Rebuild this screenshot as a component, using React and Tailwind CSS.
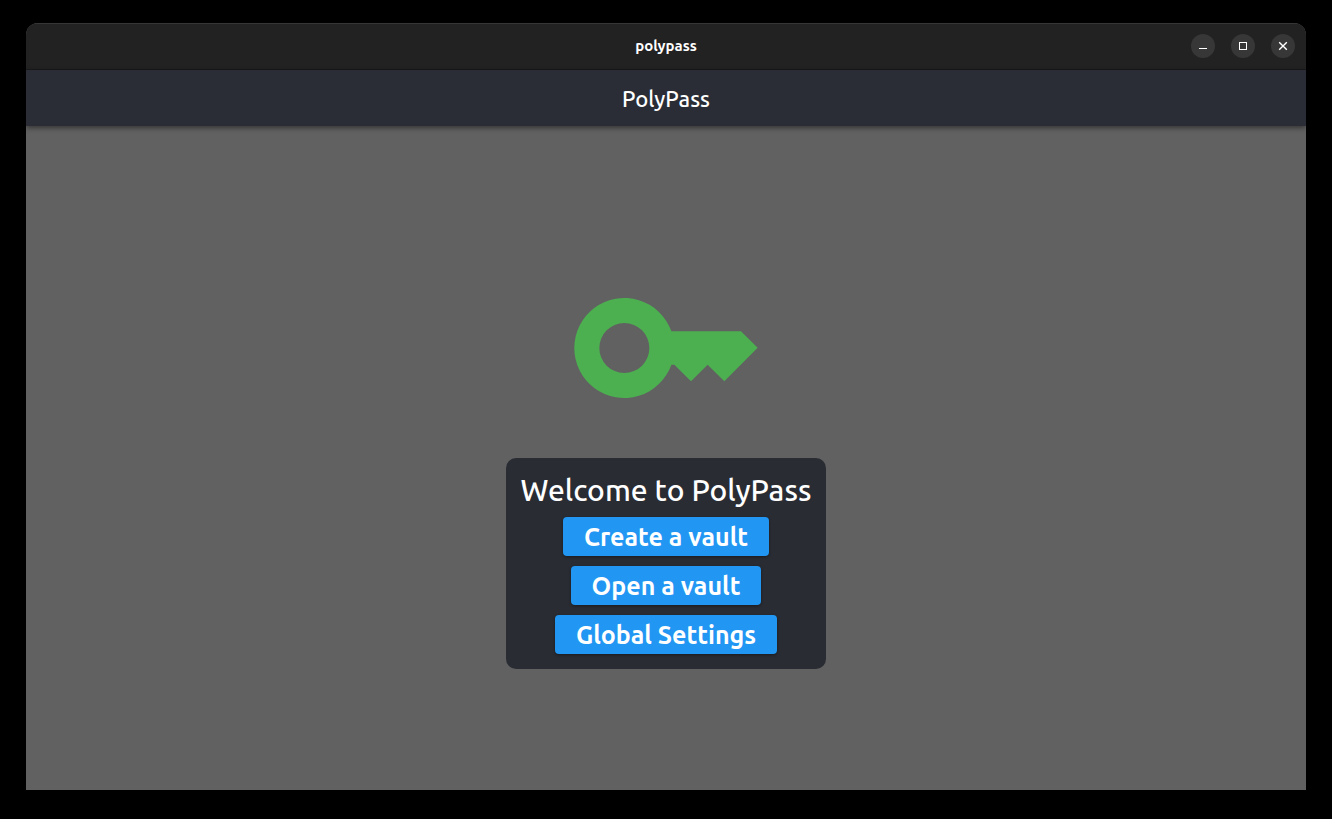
const windowButton =
  "flex size-6 items-center justify-center rounded-full bg-[#373737] text-white";

const actions = ["Create a vault", "Open a vault", "Global Settings"];

function TitleBar() {
  return (
    <div className="grid h-[47px] shrink-0 grid-cols-[1fr_auto_1fr] items-center border-t border-b border-t-[#363636] border-b-[#191919] bg-[#222222] px-[11px] pb-px">
      <span className="col-start-2 text-[15px] leading-5 font-bold text-white">polypass</span>
      <div className="flex gap-4 justify-self-end">
        <button type="button" aria-label="Minimize" className={windowButton}>
          <svg viewBox="0 0 16 16" className="size-4" fill="currentColor">
            <rect x="4" y="10" width="8" height="1" />
          </svg>
        </button>
        <button type="button" aria-label="Maximize" className={windowButton}>
          <svg viewBox="0 0 16 16" className="size-4" fill="none" stroke="currentColor">
            <rect x="4.5" y="4.5" width="7" height="7" />
          </svg>
        </button>
        <button type="button" aria-label="Close" className={windowButton}>
          <svg viewBox="0 0 16 16" className="size-4" fill="none" stroke="currentColor" strokeWidth="1.4">
            <path d="M4.2 4.2l7.6 7.6M11.8 4.2l-7.6 7.6" />
          </svg>
        </button>
      </div>
    </div>
  );
}

function KeyIcon() {
  return (
    <svg viewBox="0 0 24 24" className="size-[200px]" fill="#4caf50" aria-hidden="true">
      <path
        fillRule="evenodd"
        d="M21 10h-8.35A6 6 0 1 0 12.65 14H13l2 2 2-2 2 2 4-4.04L21 10zM7 15a3 3 0 1 1 0-6 3 3 0 0 1 0 6z"
      />
    </svg>
  );
}

export default function App() {
  return (
    <div className="flex min-h-screen flex-col bg-black px-[26px] pt-[23px] pb-[29px] font-['Ubuntu','Noto_Sans',sans-serif]">
      <div className="flex grow flex-col overflow-hidden rounded-t-xl bg-[#616161]">
        <TitleBar />
        <header className="z-10 flex h-14 shrink-0 items-center justify-center bg-[#2a2d35] pt-0.5 shadow-[0_2px_5px_rgba(0,0,0,0.45)]">
          <h1 className="text-[22px] leading-7 font-medium text-white">PolyPass</h1>
        </header>
        <main className="flex grow flex-col items-center justify-center gap-[10px]">
          <KeyIcon />
          <section className="flex flex-col items-center gap-[10px] rounded-[10px] bg-[#292c33] p-[15px] text-white">
            <h2 className="text-[30px] leading-[34px] font-medium">Welcome to PolyPass</h2>
            {actions.map((label) => (
              <button
                key={label}
                type="button"
                className="h-[39px] rounded-[4px] bg-[#2196f3] px-[21px] pt-px text-[25px] leading-7 font-bold shadow-[0_1px_3px_rgba(0,0,0,0.4)]"
              >
                {label}
              </button>
            ))}
          </section>
        </main>
      </div>
    </div>
  );
}
